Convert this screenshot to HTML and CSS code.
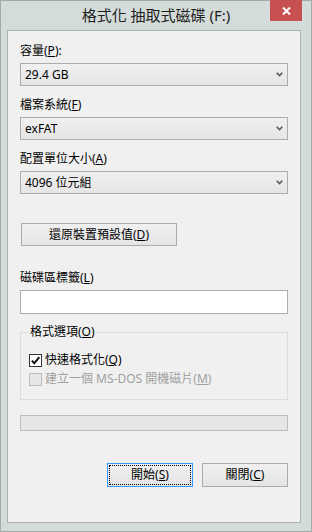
FILE: index.html
```html
<!DOCTYPE html>
<html lang="zh-Hant">
<head>
    <meta charset="UTF-8">
    <meta name="viewport" content="width=device-width, initial-scale=1.0">
    <title>格式化 抽取式磁碟 (F:)</title>
    <link rel="stylesheet" href="styles.css">
</head>
<body>
    <div class="window">
        <div class="titlebar">
            <span class="title">格式化 抽取式磁碟 (F:)</span>
            <button class="close" type="button" aria-label="關閉">
                <svg width="9" height="8" viewBox="0 0 9 8"><path d="M1 0.5 L8 7.5 M8 0.5 L1 7.5" stroke="#fff" stroke-width="2"/></svg>
            </button>
        </div>

        <div class="client">
            <div class="field">
                <label>容量(<u>P</u>):</label>
                <div class="combo">
                    <span>29.4 GB</span>
                    <svg width="7" height="5" viewBox="0 0 7 5"><path d="M0.7 0.7 L3.5 3.6 L6.3 0.7" fill="none" stroke="#5a5a5a" stroke-width="1.6"/></svg>
                </div>
            </div>
            <div class="field">
                <label>檔案系統(<u>F</u>)</label>
                <div class="combo">
                    <span>exFAT</span>
                    <svg width="7" height="5" viewBox="0 0 7 5"><path d="M0.7 0.7 L3.5 3.6 L6.3 0.7" fill="none" stroke="#5a5a5a" stroke-width="1.6"/></svg>
                </div>
            </div>
            <div class="field">
                <label>配置單位大小(<u>A</u>)</label>
                <div class="combo">
                    <span>4096 位元組</span>
                    <svg width="7" height="5" viewBox="0 0 7 5"><path d="M0.7 0.7 L3.5 3.6 L6.3 0.7" fill="none" stroke="#5a5a5a" stroke-width="1.6"/></svg>
                </div>
            </div>

            <button class="btn restore" type="button">還原裝置預設值(<u>D</u>)</button>

            <div class="field volume">
                <label>磁碟區標籤(<u>L</u>)</label>
                <div class="textbox"></div>
            </div>

            <fieldset class="options">
                <legend>格式選項(<u>O</u>)</legend>
                <div class="check">
                    <span class="box checked">
                        <svg width="11" height="11" viewBox="0 0 11 11"><path d="M1.8 5.6 L4.3 8.2 L9.3 2.2" fill="none" stroke="#111" stroke-width="2"/></svg>
                    </span>
                    <span>快速格式化(<u>Q</u>)</span>
                </div>
                <div class="check disabled">
                    <span class="box"></span>
                    <span>建立一個 MS-DOS 開機磁片(<u>M</u>)</span>
                </div>
            </fieldset>

            <div class="progress"></div>

            <div class="actions">
                <button class="btn default" type="button">開始(<u>S</u>)</button>
                <button class="btn" type="button">關閉(<u>C</u>)</button>
            </div>
        </div>
    </div>
</body>
</html>
```

FILE: styles.css
```css
body {
    margin: 0;
    font-family: "Noto Sans", "Noto Sans CJK TC", sans-serif;
    font-size: 12px;
    color: #000;
}
.window {
    width: 312px;
    height: 532px;
    box-sizing: border-box;
    border: 1px solid #a3aba8;
    background: #d4dcd9;
    display: flex;
    flex-direction: column;
}
.titlebar {
    height: 29px;
    display: grid;
    grid-template-columns: 1fr auto 1fr;
    align-items: start;
}
.title {
    grid-column: 2;
    font-size: 15px;
    line-height: 29px;
    color: #1e1e1e;
    white-space: nowrap;
}
.close {
    grid-column: 3;
    justify-self: end;
    margin: -1px 9px 0 0;
    width: 32px;
    height: 21px;
    padding: 0;
    border: none;
    background: #c75050;
    display: flex;
    align-items: center;
    justify-content: center;
}
.client {
    flex: 1;
    margin: 0 10px 8px 6px;
    border: 1px solid #aab2ae;
    background: #f0f0f0;
    padding: 12px 12px 0 12px;
    display: flex;
    flex-direction: column;
}
.field label {
    display: block;
    line-height: 16px;
    margin-bottom: 4px;
}
.field + .field {
    margin-top: 11px;
}
.combo {
    height: 23px;
    box-sizing: border-box;
    border: 1px solid #acacac;
    background: linear-gradient(#f0f0f0, #e5e5e5);
    display: flex;
    align-items: center;
    justify-content: space-between;
    padding: 0 4px 0 4px;
    line-height: 16px;
}
.btn {
    font: inherit;
    color: #000;
    height: 23px;
    padding: 0;
    box-sizing: border-box;
    border: 1px solid #acacac;
    background: linear-gradient(#f0f0f0, #e5e5e5);
    line-height: 16px;
}
.restore {
    align-self: flex-start;
    width: 156px;
    margin: 29px 0 0 1px;
}
.field.volume {
    margin-top: 24px;
}
.textbox {
    height: 24px;
    box-sizing: border-box;
    border: 1px solid #abadb3;
    background: #fff;
}
.options {
    margin: 10px 0 0;
    padding: 12px 8px 12px 7px;
    border: 1px solid #dcdcdc;
    min-width: 0;
}
.options legend {
    padding: 0 2px;
    line-height: 16px;
}
.check {
    display: flex;
    align-items: center;
    gap: 3px;
    height: 16px;
    line-height: 16px;
    padding-left: 1px;
}
.check + .check {
    margin-top: 3px;
}
.box {
    width: 13px;
    height: 13px;
    box-sizing: border-box;
    border: 1px solid #333;
    background: #fff;
    display: flex;
    align-items: center;
    justify-content: center;
}
.disabled {
    color: #a0a0a0;
}
.disabled .box {
    border-color: #bcbcbc;
    background: #e6e6e6;
}
.progress {
    margin-top: 15px;
    height: 16px;
    box-sizing: border-box;
    border: 1px solid #bcbcbc;
    background: #e6e6e6;
}
.actions {
    margin-top: 32px;
    display: flex;
    justify-content: flex-end;
    gap: 9px;
}
.actions .btn {
    width: 86px;
    height: 24px;
}
.btn.default {
    border-color: #3399ff;
    outline: 1px dotted #000;
    outline-offset: -3px;
}
```
